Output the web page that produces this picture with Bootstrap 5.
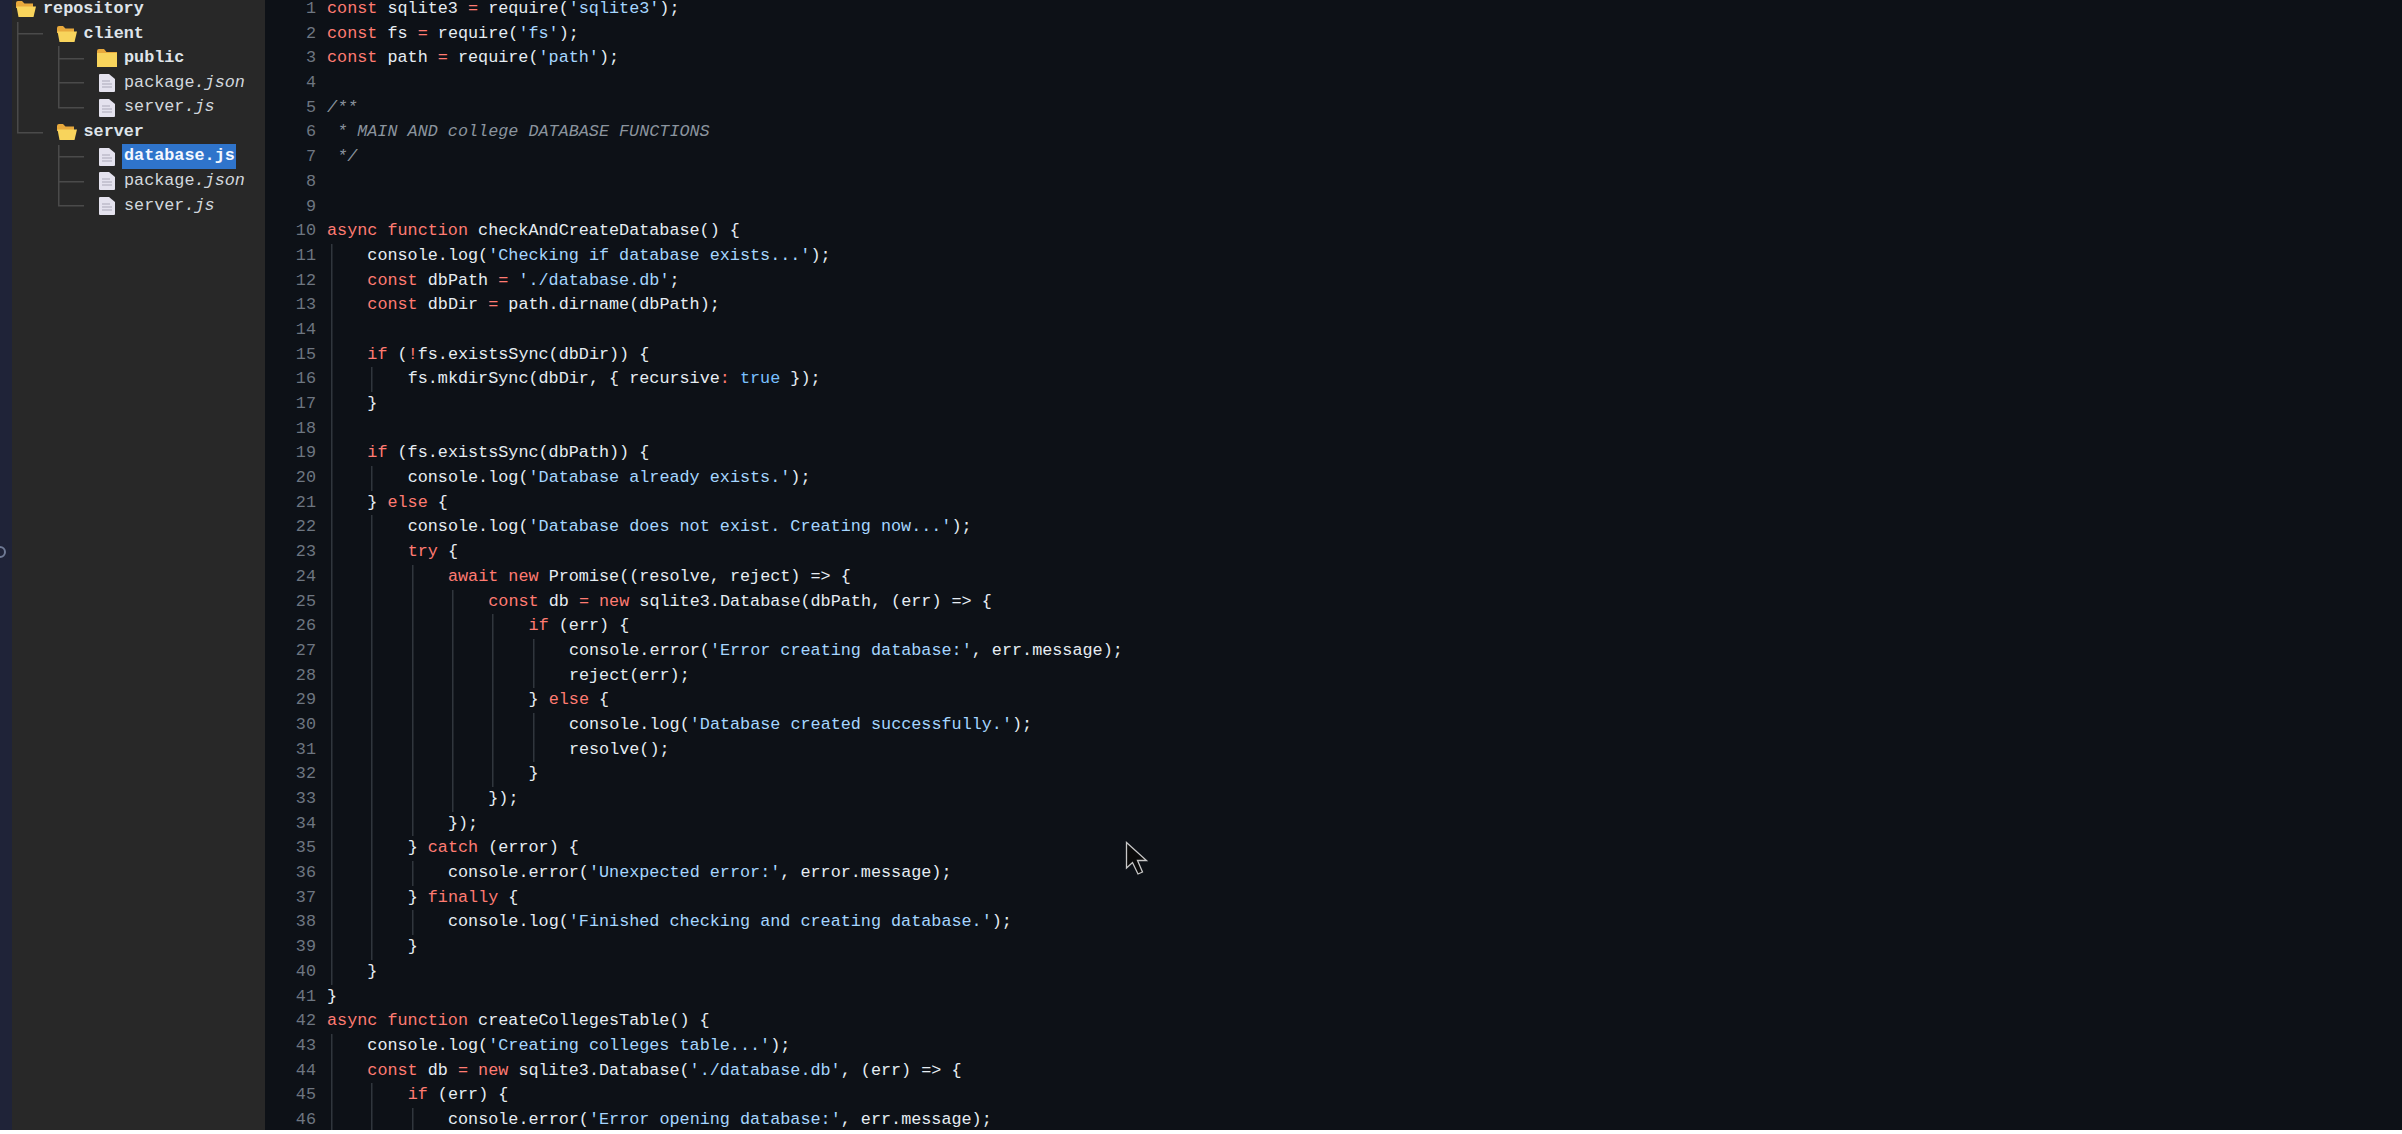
<!DOCTYPE html>
<html lang="en">
<head>
<meta charset="utf-8">
<title>database.js</title>
<link href="https://cdn.jsdelivr.net/npm/bootstrap@5.3.0/dist/css/bootstrap.min.css" rel="stylesheet">
<style>
html,body{margin:0;background:#fff}
.shot{height:1130px;background:#0d1117;font-family:"Liberation Mono",monospace;font-size:16.8px;color:#e6edf3}
.rail{width:12px;background:#1f2338;padding-bottom:26px}
.ring{width:12px;height:12px;margin-left:-6px;border:2px solid #6f7a95;border-radius:50%}
.tree-pane{width:253px;background:#282828;color:#d3d8de;padding-left:4px}
.tree-inner{margin-top:-3px}
.tree-row{height:24.6px;line-height:24.6px;white-space:pre}
.tr-gap{width:40.5px;height:24.6px;flex:none}
.tr-v{background:linear-gradient(#4a4a4a,#4a4a4a) 1px 0/1.5px 100% no-repeat}
.tr-t{background:linear-gradient(#4a4a4a,#4a4a4a) 1px 0/1.5px 100% no-repeat,linear-gradient(#4a4a4a,#4a4a4a) 1px 50%/26px 1.5px no-repeat}
.tr-l{background:linear-gradient(#4a4a4a,#4a4a4a) 1px 0/1.5px 50% no-repeat,linear-gradient(#4a4a4a,#4a4a4a) 1px 50%/26px 1.5px no-repeat}
.tr-ico{width:27px;flex:none}
.tr-ico svg{display:block}
.dir-name{font-weight:700;color:#dfe4ea}
.ext{font-style:italic}
.picked{background:#2f74cb;color:#f4f8ff;font-weight:700;padding:0 1px 0 2px;margin-left:-2px;height:25px}
.code-pane{margin-top:-3px;min-width:0}
.cl{height:24.7px;line-height:24.7px;white-space:pre}
.no{width:51px;margin-right:11px;text-align:right;color:#6e7681;flex:none}
.ig{display:inline-block;width:40.32px;height:24.7px;vertical-align:top;background:linear-gradient(#30363d,#30363d) 4px 0/1.5px 100% no-repeat}
.k{color:#ff7b72}
.s{color:#a5d6ff}
.b{color:#79c0ff}
.cm{color:#8b949e;font-style:italic}
.arrow{position:absolute;left:1125px;top:841px}
</style>
</head>
<body>
<div class="shot d-flex overflow-hidden">
  <div class="rail d-flex align-items-center flex-shrink-0"><div class="ring"></div></div>
  <div class="tree-pane flex-shrink-0"><div class="tree-inner">
    <div class="tree-row d-flex align-items-center"><span class="tr-ico"><svg width="20" height="18" viewBox="0 0 20 18"><path d="M0 3Q0 1 2 1H6L8.5 3.5H17V8H0Z" fill="#e8a93c"/><path d="M0.5 6.5H20L17.5 17H2.5Z" fill="#f8d45c"/></svg></span><span class="dir-name">repository</span></div>
    <div class="tree-row d-flex align-items-center"><span class="tr-gap tr-t"></span><span class="tr-ico"><svg width="20" height="18" viewBox="0 0 20 18"><path d="M0 3Q0 1 2 1H6L8.5 3.5H17V8H0Z" fill="#e8a93c"/><path d="M0.5 6.5H20L17.5 17H2.5Z" fill="#f8d45c"/></svg></span><span class="dir-name">client</span></div>
    <div class="tree-row d-flex align-items-center"><span class="tr-gap tr-v"></span><span class="tr-gap tr-t"></span><span class="tr-ico"><svg width="20" height="18" viewBox="0 0 20 18"><path d="M0 2Q0 0 2 0H7L9.5 3H20V7H0Z" fill="#e8a93c"/><rect x="0" y="4" width="20" height="14" fill="#f8d45c"/></svg></span><span class="dir-name">public</span></div>
    <div class="tree-row d-flex align-items-center"><span class="tr-gap tr-v"></span><span class="tr-gap tr-t"></span><span class="tr-ico"><svg width="20" height="20" viewBox="0 0 20 20"><path d="M2 2Q2 1 3 1H12L18 6V18Q18 19 17 19H3Q2 19 2 18Z" fill="#e4e2ee"/><path d="M5 8H13M5 11H15M5 14H15" stroke="#a9a8b8" stroke-width="1.2"/></svg></span><span>package<span class="ext">.json</span></span></div>
    <div class="tree-row d-flex align-items-center"><span class="tr-gap tr-v"></span><span class="tr-gap tr-l"></span><span class="tr-ico"><svg width="20" height="20" viewBox="0 0 20 20"><path d="M2 2Q2 1 3 1H12L18 6V18Q18 19 17 19H3Q2 19 2 18Z" fill="#e4e2ee"/><path d="M5 8H13M5 11H15M5 14H15" stroke="#a9a8b8" stroke-width="1.2"/></svg></span><span>server<span class="ext">.js</span></span></div>
    <div class="tree-row d-flex align-items-center"><span class="tr-gap tr-l"></span><span class="tr-ico"><svg width="20" height="18" viewBox="0 0 20 18"><path d="M0 3Q0 1 2 1H6L8.5 3.5H17V8H0Z" fill="#e8a93c"/><path d="M0.5 6.5H20L17.5 17H2.5Z" fill="#f8d45c"/></svg></span><span class="dir-name">server</span></div>
    <div class="tree-row d-flex align-items-center"><span class="tr-gap"></span><span class="tr-gap tr-t"></span><span class="tr-ico"><svg width="20" height="20" viewBox="0 0 20 20"><path d="M2 2Q2 1 3 1H12L18 6V18Q18 19 17 19H3Q2 19 2 18Z" fill="#e4e2ee"/><path d="M5 8H13M5 11H15M5 14H15" stroke="#a9a8b8" stroke-width="1.2"/></svg></span><span class="picked">database.js</span></div>
    <div class="tree-row d-flex align-items-center"><span class="tr-gap"></span><span class="tr-gap tr-t"></span><span class="tr-ico"><svg width="20" height="20" viewBox="0 0 20 20"><path d="M2 2Q2 1 3 1H12L18 6V18Q18 19 17 19H3Q2 19 2 18Z" fill="#e4e2ee"/><path d="M5 8H13M5 11H15M5 14H15" stroke="#a9a8b8" stroke-width="1.2"/></svg></span><span>package<span class="ext">.json</span></span></div>
    <div class="tree-row d-flex align-items-center"><span class="tr-gap"></span><span class="tr-gap tr-l"></span><span class="tr-ico"><svg width="20" height="20" viewBox="0 0 20 20"><path d="M2 2Q2 1 3 1H12L18 6V18Q18 19 17 19H3Q2 19 2 18Z" fill="#e4e2ee"/><path d="M5 8H13M5 11H15M5 14H15" stroke="#a9a8b8" stroke-width="1.2"/></svg></span><span>server<span class="ext">.js</span></span></div>
  </div></div>
  <div class="code-pane flex-grow-1">
<div class="cl d-flex"><span class="no">1</span><span><span class="k">const</span> sqlite3 <span class="k">=</span> require(<span class="s">'sqlite3'</span>);</span></div>
<div class="cl d-flex"><span class="no">2</span><span><span class="k">const</span> fs <span class="k">=</span> require(<span class="s">'fs'</span>);</span></div>
<div class="cl d-flex"><span class="no">3</span><span><span class="k">const</span> path <span class="k">=</span> require(<span class="s">'path'</span>);</span></div>
<div class="cl d-flex"><span class="no">4</span><span></span></div>
<div class="cl d-flex"><span class="no">5</span><span class="cm">/**</span></div>
<div class="cl d-flex"><span class="no">6</span><span class="cm"> * MAIN AND college DATABASE FUNCTIONS</span></div>
<div class="cl d-flex"><span class="no">7</span><span class="cm"> */</span></div>
<div class="cl d-flex"><span class="no">8</span><span></span></div>
<div class="cl d-flex"><span class="no">9</span><span></span></div>
<div class="cl d-flex"><span class="no">10</span><span><span class="k">async function</span> checkAndCreateDatabase() {</span></div>
<div class="cl d-flex"><span class="no">11</span><span><i class="ig"></i>console.log(<span class="s">'Checking if database exists...'</span>);</span></div>
<div class="cl d-flex"><span class="no">12</span><span><i class="ig"></i><span class="k">const</span> dbPath <span class="k">=</span> <span class="s">'./database.db'</span>;</span></div>
<div class="cl d-flex"><span class="no">13</span><span><i class="ig"></i><span class="k">const</span> dbDir <span class="k">=</span> path.dirname(dbPath);</span></div>
<div class="cl d-flex"><span class="no">14</span><span><i class="ig"></i></span></div>
<div class="cl d-flex"><span class="no">15</span><span><i class="ig"></i><span class="k">if</span> (<span class="k">!</span>fs.existsSync(dbDir)) {</span></div>
<div class="cl d-flex"><span class="no">16</span><span><i class="ig"></i><i class="ig"></i>fs.mkdirSync(dbDir, { recursive<span class="k">:</span> <span class="b">true</span> });</span></div>
<div class="cl d-flex"><span class="no">17</span><span><i class="ig"></i>}</span></div>
<div class="cl d-flex"><span class="no">18</span><span><i class="ig"></i></span></div>
<div class="cl d-flex"><span class="no">19</span><span><i class="ig"></i><span class="k">if</span> (fs.existsSync(dbPath)) {</span></div>
<div class="cl d-flex"><span class="no">20</span><span><i class="ig"></i><i class="ig"></i>console.log(<span class="s">'Database already exists.'</span>);</span></div>
<div class="cl d-flex"><span class="no">21</span><span><i class="ig"></i>} <span class="k">else</span> {</span></div>
<div class="cl d-flex"><span class="no">22</span><span><i class="ig"></i><i class="ig"></i>console.log(<span class="s">'Database does not exist. Creating now...'</span>);</span></div>
<div class="cl d-flex"><span class="no">23</span><span><i class="ig"></i><i class="ig"></i><span class="k">try</span> {</span></div>
<div class="cl d-flex"><span class="no">24</span><span><i class="ig"></i><i class="ig"></i><i class="ig"></i><span class="k">await new</span> Promise((resolve, reject) =&gt; {</span></div>
<div class="cl d-flex"><span class="no">25</span><span><i class="ig"></i><i class="ig"></i><i class="ig"></i><i class="ig"></i><span class="k">const</span> db <span class="k">= new</span> sqlite3.Database(dbPath, (err) =&gt; {</span></div>
<div class="cl d-flex"><span class="no">26</span><span><i class="ig"></i><i class="ig"></i><i class="ig"></i><i class="ig"></i><i class="ig"></i><span class="k">if</span> (err) {</span></div>
<div class="cl d-flex"><span class="no">27</span><span><i class="ig"></i><i class="ig"></i><i class="ig"></i><i class="ig"></i><i class="ig"></i><i class="ig"></i>console.error(<span class="s">'Error creating database:'</span>, err.message);</span></div>
<div class="cl d-flex"><span class="no">28</span><span><i class="ig"></i><i class="ig"></i><i class="ig"></i><i class="ig"></i><i class="ig"></i><i class="ig"></i>reject(err);</span></div>
<div class="cl d-flex"><span class="no">29</span><span><i class="ig"></i><i class="ig"></i><i class="ig"></i><i class="ig"></i><i class="ig"></i>} <span class="k">else</span> {</span></div>
<div class="cl d-flex"><span class="no">30</span><span><i class="ig"></i><i class="ig"></i><i class="ig"></i><i class="ig"></i><i class="ig"></i><i class="ig"></i>console.log(<span class="s">'Database created successfully.'</span>);</span></div>
<div class="cl d-flex"><span class="no">31</span><span><i class="ig"></i><i class="ig"></i><i class="ig"></i><i class="ig"></i><i class="ig"></i><i class="ig"></i>resolve();</span></div>
<div class="cl d-flex"><span class="no">32</span><span><i class="ig"></i><i class="ig"></i><i class="ig"></i><i class="ig"></i><i class="ig"></i>}</span></div>
<div class="cl d-flex"><span class="no">33</span><span><i class="ig"></i><i class="ig"></i><i class="ig"></i><i class="ig"></i>});</span></div>
<div class="cl d-flex"><span class="no">34</span><span><i class="ig"></i><i class="ig"></i><i class="ig"></i>});</span></div>
<div class="cl d-flex"><span class="no">35</span><span><i class="ig"></i><i class="ig"></i>} <span class="k">catch</span> (error) {</span></div>
<div class="cl d-flex"><span class="no">36</span><span><i class="ig"></i><i class="ig"></i><i class="ig"></i>console.error(<span class="s">'Unexpected error:'</span>, error.message);</span></div>
<div class="cl d-flex"><span class="no">37</span><span><i class="ig"></i><i class="ig"></i>} <span class="k">finally</span> {</span></div>
<div class="cl d-flex"><span class="no">38</span><span><i class="ig"></i><i class="ig"></i><i class="ig"></i>console.log(<span class="s">'Finished checking and creating database.'</span>);</span></div>
<div class="cl d-flex"><span class="no">39</span><span><i class="ig"></i><i class="ig"></i>}</span></div>
<div class="cl d-flex"><span class="no">40</span><span><i class="ig"></i>}</span></div>
<div class="cl d-flex"><span class="no">41</span><span>}</span></div>
<div class="cl d-flex"><span class="no">42</span><span><span class="k">async function</span> createCollegesTable() {</span></div>
<div class="cl d-flex"><span class="no">43</span><span><i class="ig"></i>console.log(<span class="s">'Creating colleges table...'</span>);</span></div>
<div class="cl d-flex"><span class="no">44</span><span><i class="ig"></i><span class="k">const</span> db <span class="k">= new</span> sqlite3.Database(<span class="s">'./database.db'</span>, (err) =&gt; {</span></div>
<div class="cl d-flex"><span class="no">45</span><span><i class="ig"></i><i class="ig"></i><span class="k">if</span> (err) {</span></div>
<div class="cl d-flex"><span class="no">46</span><span><i class="ig"></i><i class="ig"></i><i class="ig"></i>console.error(<span class="s">'Error opening database:'</span>, err.message);</span></div>
  </div>
</div>
<svg class="arrow" width="24" height="36" viewBox="0 0 24 36"><path d="M1.5 1.5V27L7.5 21.5L13 33L17.5 31L12.5 19.5H21.5Z" fill="#0a0a0a" stroke="#c8c8c8" stroke-width="1.3"/></svg>
<script src="https://cdn.jsdelivr.net/npm/bootstrap@5.3.0/dist/js/bootstrap.bundle.min.js"></script>
</body>
</html>
